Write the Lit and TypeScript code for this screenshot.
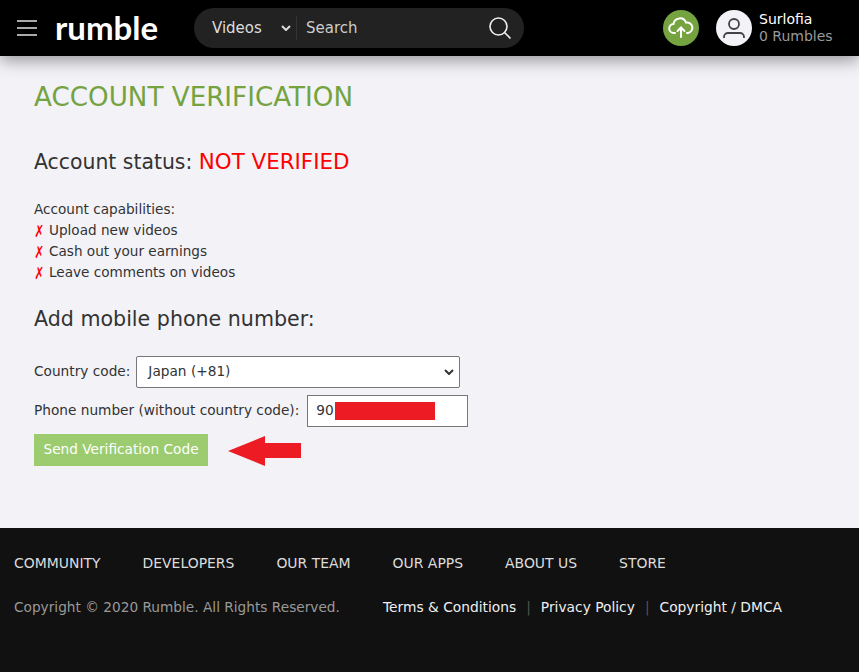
import { LitElement, css, html } from 'lit';
import { customElement } from 'lit/decorators.js';

const capabilities = ['Upload new videos', 'Cash out your earnings', 'Leave comments on videos'];
const footerLinks = ['COMMUNITY', 'DEVELOPERS', 'OUR TEAM', 'OUR APPS', 'ABOUT US', 'STORE'];
const legalLinks = ['Terms & Conditions', 'Privacy Policy', 'Copyright / DMCA'];

@customElement('app-root')
export class AppRoot extends LitElement {
  static styles = css`
    :host {
      display: block;
      height: 672px;
      overflow: hidden;
      background: #f2f2f7;
      color: #333;
      font-family: 'DejaVu Sans', 'Liberation Sans', sans-serif;
      font-size: 13.7px;
    }

    .header {
      position: relative;
      z-index: 1;
      height: 56px;
      box-sizing: border-box;
      padding: 8px 0 0 17px;
      display: flex;
      align-items: flex-start;
      background: #000;
      box-shadow: 0 4px 16px rgba(0, 0, 0, 0.4);
    }

    .header > * {
      flex: none;
    }

    .burger {
      width: 20px;
      height: 16px;
      margin-top: 12px;
      display: flex;
      flex-direction: column;
      justify-content: space-between;
    }

    .burger span {
      height: 2px;
      background: #aaa;
    }

    .logo {
      margin: 1px 0 0 18px;
      width: 139px;
      color: #fff;
      font-family: Lato, sans-serif;
      font-size: 33px;
      font-weight: 700;
      line-height: 36px;
    }

    .search {
      width: 330px;
      height: 40px;
      display: flex;
      align-items: center;
      background: #222;
      border-radius: 20px;
      color: #ddd;
      font-size: 15px;
    }

    .category {
      width: 103px;
      height: 24px;
      box-sizing: border-box;
      padding: 0 5px 0 18px;
      display: flex;
      align-items: center;
      justify-content: space-between;
      border-right: 1px solid #333;
    }

    .query {
      flex: 1;
      padding-left: 9px;
      color: #ccc;
    }

    .lens {
      margin-right: 12px;
    }

    .upload {
      width: 36px;
      height: 36px;
      margin: 2px 0 0 139px;
      display: flex;
      align-items: center;
      justify-content: center;
      border-radius: 50%;
      background: #74a33f;
    }

    .avatar {
      width: 36px;
      height: 36px;
      margin: 2px 7px 0 17px;
      display: flex;
      align-items: center;
      justify-content: center;
      border-radius: 50%;
      background: #f2f2f7;
    }

    .account {
      line-height: 17px;
      font-size: 14px;
      color: #fff;
      margin-top: 3px;
      white-space: nowrap;
    }

    .account div + div {
      color: #9a9a9a;
    }

    .main {
      height: 472px;
      box-sizing: border-box;
      padding: 23px 0 0 34px;
    }

    h1 {
      margin: 0;
      color: #74a33f;
      font-size: 26.2px;
      font-weight: 400;
      line-height: 36px;
    }

    .status {
      margin: 32px 0 0;
      font-size: 20.4px;
      font-weight: 400;
      line-height: 30px;
    }

    .status span {
      color: #f00;
      font-size: 21.4px;
    }

    .capabilities {
      margin-top: 22px;
      font-size: 13.6px;
    }

    .capabilities > div {
      height: 21px;
      line-height: 21px;
    }

    .capabilities i {
      display: inline-block;
      width: 15px;
      color: #f00;
      font-style: normal;
      font-size: 14px;
      line-height: 21px;
      transform: translateY(1px) scale(0.85, 1.2);
      transform-origin: 1px center;
    }

    h2 {
      margin: 21px 0 0;
      font-size: 20.6px;
      font-weight: 400;
      line-height: 30px;
    }

    .row {
      display: flex;
      align-items: center;
      gap: 8px;
    }

    .row.country {
      margin-top: 22px;
      gap: 6px;
    }

    .row.phone {
      margin-top: 7px;
    }

    .label {
      margin-top: -2px;
    }

    .select {
      width: 324px;
      height: 32px;
      box-sizing: border-box;
      padding: 0 5px 2px 11px;
      display: flex;
      align-items: center;
      justify-content: space-between;
      background: #fff;
      border: 1px solid #777;
      border-radius: 2px;
    }

    .select svg {
      margin-top: 2px;
    }

    .input {
      width: 161px;
      height: 32px;
      box-sizing: border-box;
      padding-left: 8px;
      display: flex;
      align-items: center;
      gap: 1px;
      background: #fff;
      border: 1px solid #777;
    }

    .input-text {
      margin-top: -2px;
    }

    .redaction {
      width: 100px;
      height: 18px;
      background: #ed1c24;
    }

    .send-row {
      margin-top: 7px;
      display: flex;
      align-items: center;
      gap: 20px;
    }

    .send {
      width: 174px;
      height: 32px;
      padding: 0 0 2px;
      border: none;
      background: #9ccc6f;
      color: #fff;
      font: inherit;
    }

    .arrow {
      margin-top: 2px;
    }

    .footer {
      height: 144px;
      box-sizing: border-box;
      padding: 25px 14px 0;
      background: #111;
      color: #ddd;
    }

    .links {
      display: flex;
      gap: 42px;
      font-size: 13.95px;
      line-height: 20px;
    }

    .legal {
      margin-top: 24px;
      display: flex;
      line-height: 20px;
    }

    .copyright {
      width: 369px;
      color: #999;
    }

    .legal-links {
      display: flex;
      gap: 10px;
      color: #eee;
      font-size: 13.8px;
    }

    .legal-links b {
      font-weight: 400;
      color: #555;
    }
  `;

  render() {
    return html`
      <header class="header">
        <div class="burger"><span></span><span></span><span></span></div>
        <div class="logo">rumble</div>
        <div class="search">
          <div class="category">
            Videos
            <svg width="10" height="6" viewBox="0 0 10 6" fill="none" stroke="#ddd" stroke-width="2">
              <path d="M1 1l4 4 4-4" />
            </svg>
          </div>
          <div class="query">Search</div>
          <svg class="lens" width="24" height="24" viewBox="0 0 24 24" fill="none" stroke="#eee" stroke-width="1.6">
            <circle cx="10.5" cy="10.5" r="8.5" />
            <path d="M16.5 16.5l6 6" />
          </svg>
        </div>
        <div class="upload">
          <svg width="26" height="22" viewBox="0 0 26 22" fill="none" stroke="#fff" stroke-width="2" stroke-linecap="round">
            <path d="M7 16H6a4.5 4.5 0 0 1-.5-9A6.5 6.5 0 0 1 18 5.5 5.3 5.3 0 0 1 20 16h-1" />
            <path d="M13 20v-9M9.5 14l3.5-3.5 3.5 3.5" />
          </svg>
        </div>
        <div class="avatar">
          <svg width="24" height="24" viewBox="0 0 24 24" fill="none" stroke="#444" stroke-width="1.8">
            <circle cx="12" cy="8" r="5" />
            <path d="M2 22v-1a4 4 0 0 1 4-4h12a4 4 0 0 1 4 4v1" />
          </svg>
        </div>
        <div class="account">
          <div>Surlofia</div>
          <div>0 Rumbles</div>
        </div>
      </header>

      <main class="main">
        <h1>ACCOUNT VERIFICATION</h1>
        <div class="status">Account status: <span>NOT VERIFIED</span></div>
        <div class="capabilities">
          <div>Account capabilities:</div>
          ${capabilities.map((c) => html`<div><i>✗</i>${c}</div>`)}
        </div>
        <h2>Add mobile phone number:</h2>
        <div class="row country">
          <span class="label">Country code:</span>
          <div class="select">
            Japan (+81)
            <svg width="10" height="6" viewBox="0 0 10 6" fill="none" stroke="#333" stroke-width="2">
              <path d="M1 1l4 4 4-4" />
            </svg>
          </div>
        </div>
        <div class="row phone">
          <span class="label">Phone number (without country code):</span>
          <div class="input"><span class="input-text">90</span><span class="redaction"></span></div>
        </div>
        <div class="send-row">
          <button class="send">Send Verification Code</button>
          <svg class="arrow" width="73" height="30" viewBox="0 0 73 30">
            <path d="M0 15L37 0v7h36v15H37v8z" fill="#ed1c24" />
          </svg>
        </div>
      </main>

      <footer class="footer">
        <div class="links">${footerLinks.map((l) => html`<span>${l}</span>`)}</div>
        <div class="legal">
          <div class="copyright">Copyright © 2020 Rumble. All Rights Reserved.</div>
          <div class="legal-links">
            ${legalLinks.map((l, i) => html`${i ? html`<b>|</b>` : ''}<span>${l}</span>`)}
          </div>
        </div>
      </footer>
    `;
  }
}
